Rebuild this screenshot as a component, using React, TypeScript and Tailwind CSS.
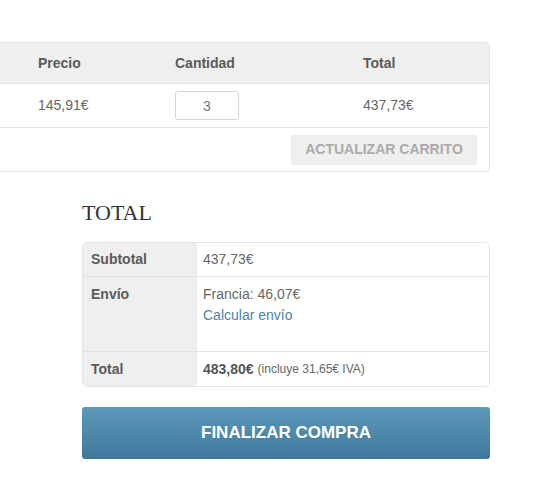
import React, { useState } from 'react';

const font = "font-['Liberation_Sans',Arial,sans-serif]";

export default function App() {
  const [qty, setQty] = useState('3');

  return (
    <div className={`${font} bg-white w-[553px] h-[480px] overflow-hidden text-[14px] text-[#666]`}>
      {/* cart table, product columns cut off on the left */}
      <div className="pt-[42px] w-[490px]">
        <div className="border-y border-r border-[#e3e3e3] rounded-r-[5px] overflow-hidden">
          <div className="flex h-[41px] items-center bg-[#efefef] border-b border-[#e3e3e3] font-bold text-[#5a5a5a]">
            <div className="w-[26px]" />
            <div className="w-[137px] pl-[12px]">Precio</div>
            <div className="w-[188px] pl-[12px]">Cantidad</div>
            <div className="w-[138px] pl-[12px]">Total</div>
          </div>
          <div className="flex h-[44px] items-center border-b border-[#e3e3e3]">
            <div className="w-[26px]" />
            <div className="w-[137px] pl-[12px]">145,91€</div>
            <div className="w-[188px] pl-[12px]">
              <input
                value={qty}
                onChange={(e) => setQty(e.target.value)}
                className="w-[64px] h-[29px] border border-[#d6d6d6] rounded-[3px] text-center text-[#777] outline-none"
              />
            </div>
            <div className="w-[138px] pl-[12px]">437,73€</div>
          </div>
          <div className="flex h-[43px] items-center justify-end pr-[12px]">
            <button className="w-[186px] h-[30px] bg-[#efefef] rounded-[3px] font-bold text-[#ababab] uppercase">
              Actualizar carrito
            </button>
          </div>
        </div>
      </div>

      {/* cart totals */}
      <div className="ml-[82px] w-[408px] pt-[28px]">
        <h2 className="font-['Liberation_Serif',serif] text-[22px] leading-[26px] text-[#333] mb-[16px]">TOTAL</h2>
        <div className="border border-[#e3e3e3] rounded-[5px] overflow-hidden">
          <div className="flex h-[34px] border-b border-[#e3e3e3]">
            <div className="w-[114px] bg-[#efefef] pl-[8px] flex items-center font-bold text-[#5a5a5a]">Subtotal</div>
            <div className="flex-1 pl-[6px] flex items-center">437,73€</div>
          </div>
          <div className="flex h-[75px] border-b border-[#e3e3e3]">
            <div className="w-[114px] bg-[#efefef] pl-[8px] pt-[7px] font-bold text-[#5a5a5a]">Envío</div>
            <div className="flex-1 pl-[6px] pt-[7px] leading-[21px]">
              <div>Francia: 46,07€</div>
              <a className="text-[#4e82a6]" href="#">Calcular envío</a>
            </div>
          </div>
          <div className="flex h-[34px]">
            <div className="w-[114px] bg-[#efefef] pl-[8px] flex items-center font-bold text-[#5a5a5a]">Total</div>
            <div className="flex-1 pl-[6px] flex items-center">
              <span className="font-bold text-[#555]">483,80€</span>
              <span className="ml-[4px] text-[12px]">(incluye 31,65€ IVA)</span>
            </div>
          </div>
        </div>
        <button className="mt-[20px] w-full h-[52px] rounded-[3px] bg-gradient-to-b from-[#5c99bb] to-[#40789a] text-white font-bold text-[17px]">
          FINALIZAR COMPRA
        </button>
      </div>
    </div>
  );
}
